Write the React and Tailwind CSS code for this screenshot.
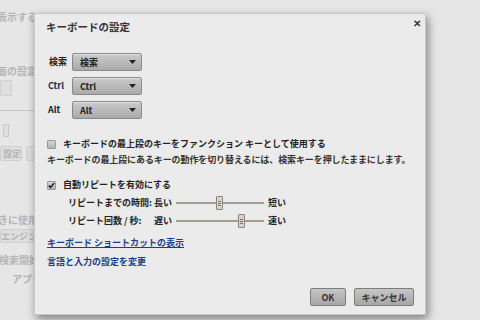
import React from "react";

const font = { fontFamily: '"Noto Sans CJK JP", "Noto Sans", sans-serif' };

function Select({ label }) {
  return (
    <div className="flex h-[18px] w-[70px] items-center justify-between rounded-[2px] border border-[#8a8a8a] bg-gradient-to-b from-[#cbcbcb] to-[#aaaaaa] pl-[7px] pr-[5px] shadow-[inset_0_1px_0_rgba(255,255,255,0.4)]">
      <span className="text-[9px] font-bold leading-none text-[#222]">{label}</span>
      <svg width="7" height="4" viewBox="0 0 7 4"><path d="M0 0 L7 0 L3.5 4 Z" fill="#222" /></svg>
    </div>
  );
}

function Slider({ pos }) {
  return (
    <div className="relative h-[14px] w-[88px]">
      <div className="absolute left-0 right-0 top-[6px] h-[2px] bg-[#a59c94]" />
      <div
        className="absolute top-0 flex h-[14px] w-[7px] flex-col items-center justify-center gap-[1px] rounded-[1px] border border-[#8a857c] bg-[#d9d3c8]"
        style={{ left: pos }}
      >
        <div className="h-px w-[3px] bg-[#777]" />
        <div className="h-px w-[3px] bg-[#777]" />
        <div className="h-px w-[3px] bg-[#777]" />
      </div>
    </div>
  );
}

function Button({ children, w }) {
  return (
    <div className={`flex h-[18px] ${w} items-center justify-center rounded-[2px] border border-[#7c7c7c] bg-gradient-to-b from-[#c6c6c6] to-[#a6a6a6] text-[9px] font-bold leading-none text-[#333]`}>
      {children}
    </div>
  );
}

export default function App() {
  return (
    <div className="relative h-[320px] w-[480px] overflow-hidden bg-[#e6e6e6]" style={font}>
      {/* background page (faded) */}
      <div className="flex flex-col whitespace-nowrap text-[10px] font-bold leading-[14px] text-[#b4b4b4]">
        <div className="ml-[-3px] mt-[10px] h-[14px]">表示する</div>
        <div className="ml-[-3px] mt-[40px] h-[14px]">面の設定を</div>
        <div className="mt-[2px] h-[16px] w-[12px] rounded-[2px] border border-[#cfcfcf] bg-[#dedede]" />
        <div className="mt-[14px] h-px w-[34px] bg-[#c9c9c9]" />
        <div className="mt-[13px] ml-[3px] h-[13px] w-[6px] border border-[#c9c9c9] bg-[#e0e0e0]" />
        <div className="mt-[9px] flex gap-[4px]">
          <div className="flex h-[15px] w-[22px] items-center justify-end rounded-[2px] border border-[#cfcfcf] bg-[#dedede] text-[9px] leading-none">設定</div>
          <div className="h-[15px] w-[12px] rounded-[2px] border border-[#cfcfcf] bg-[#dedede]" />
        </div>
        <div className="mt-[52px] ml-[-2px] h-[14px]">きに使用</div>
        <div className="mt-[2px] flex h-[14px] w-[34px] items-center overflow-hidden rounded-[2px] border border-[#cfcfcf] bg-[#dedede] text-[9px] leading-none">エンジン</div>
        <div className="mt-[10px] ml-[-1px] h-[14px]">検索開始</div>
        <div className="mt-[5px] ml-[12px] h-[14px]">アプリ</div>
      </div>

      {/* dialog */}
      <div className="absolute left-[34px] top-[13px] flex h-[302px] w-[392px] flex-col rounded-[2px] border border-[#c8c8c8] bg-[#ebebeb] pl-[11px] pr-[8px] shadow-[2px_4px_10px_rgba(0,0,0,0.45)]">
        <div className="mt-[6px] flex h-[14px] items-center justify-between">
          <div className="text-[10.5px] font-bold leading-[14px] text-[#333]">キーボードの設定</div>
          <div className="mr-[-4px] mt-[-8px] text-[10px] font-bold leading-none text-[#333]">✕</div>
        </div>

        <div className="mt-[19px] flex flex-col gap-[6px] text-[9px] font-bold leading-[14px] text-[#222]">
          <div className="flex items-center">
            <span className="w-[26px] pl-[3px]">検索</span>
            <Select label="検索" />
          </div>
          <div className="flex items-center">
            <span className="w-[26px] pl-[2px] text-[#1d2a4a]">Ctrl</span>
            <Select label="Ctrl" />
          </div>
          <div className="flex items-center">
            <span className="w-[26px] pl-[2px]">Alt</span>
            <Select label="Alt" />
          </div>
        </div>

        <div className="mt-[18px] flex h-[14px] items-center gap-[7px] pl-[1px] text-[9px] font-bold leading-[14px] text-[#222]">
          <div className="h-[9px] w-[9px] rounded-[1px] border border-[#9a9a9a] bg-gradient-to-b from-[#d4d4d4] to-[#b4b4b4]" />
          <span>キーボードの最上段のキーをファンクション キーとして使用する</span>
        </div>
        <div className="mt-[2px] h-[14px] whitespace-nowrap pl-[1px] text-[9px] font-bold leading-[14px] tracking-[-0.1px] text-[#333]">
          キーボードの最上段にあるキーの動作を切り替えるには、検索キーを押したままにします。
        </div>

        <div className="mt-[11px] flex h-[14px] items-center gap-[7px] pl-[1px] text-[9px] font-bold leading-[14px] text-[#222]">
          <div className="flex h-[9px] w-[9px] items-center justify-center rounded-[1px] border border-[#9a9a9a] bg-gradient-to-b from-[#d4d4d4] to-[#b4b4b4]">
            <svg width="8" height="7" viewBox="0 0 8 7"><path d="M1 3.5 L3 5.8 L7 0.8" stroke="#111" strokeWidth="1.6" fill="none" /></svg>
          </div>
          <span>自動リピートを有効にする</span>
        </div>

        <div className="ml-[22px] mt-[4px] flex flex-col gap-[4px] text-[9px] font-bold leading-[14px] text-[#222]">
          <div className="flex h-[14px] items-center">
            <span className="w-[86px]">リピートまでの時間:</span>
            <span className="w-[22px]">長い</span>
            <Slider pos={40} />
            <span className="ml-[4px]">短い</span>
          </div>
          <div className="flex h-[14px] items-center">
            <span className="w-[86px]">リピート回数 / 秒:</span>
            <span className="w-[22px]">遅い</span>
            <Slider pos={62} />
            <span className="ml-[4px]">速い</span>
          </div>
        </div>

        <div className="mt-[8px] h-[14px] pl-[1px] text-[9px] font-bold leading-[14px] text-[#1a3c8c] underline">キーボード ショートカットの表示</div>
        <div className="mt-[5px] h-[14px] pl-[1px] text-[9px] font-bold leading-[14px] text-[#1a3c8c]">言語と入力の設定を変更</div>

        <div className="mt-auto mb-[8px] mr-[3px] flex justify-end gap-[8px]">
          <Button w="w-[36px]">OK</Button>
          <Button w="w-[60px]">キャンセル</Button>
        </div>
      </div>
    </div>
  );
}
